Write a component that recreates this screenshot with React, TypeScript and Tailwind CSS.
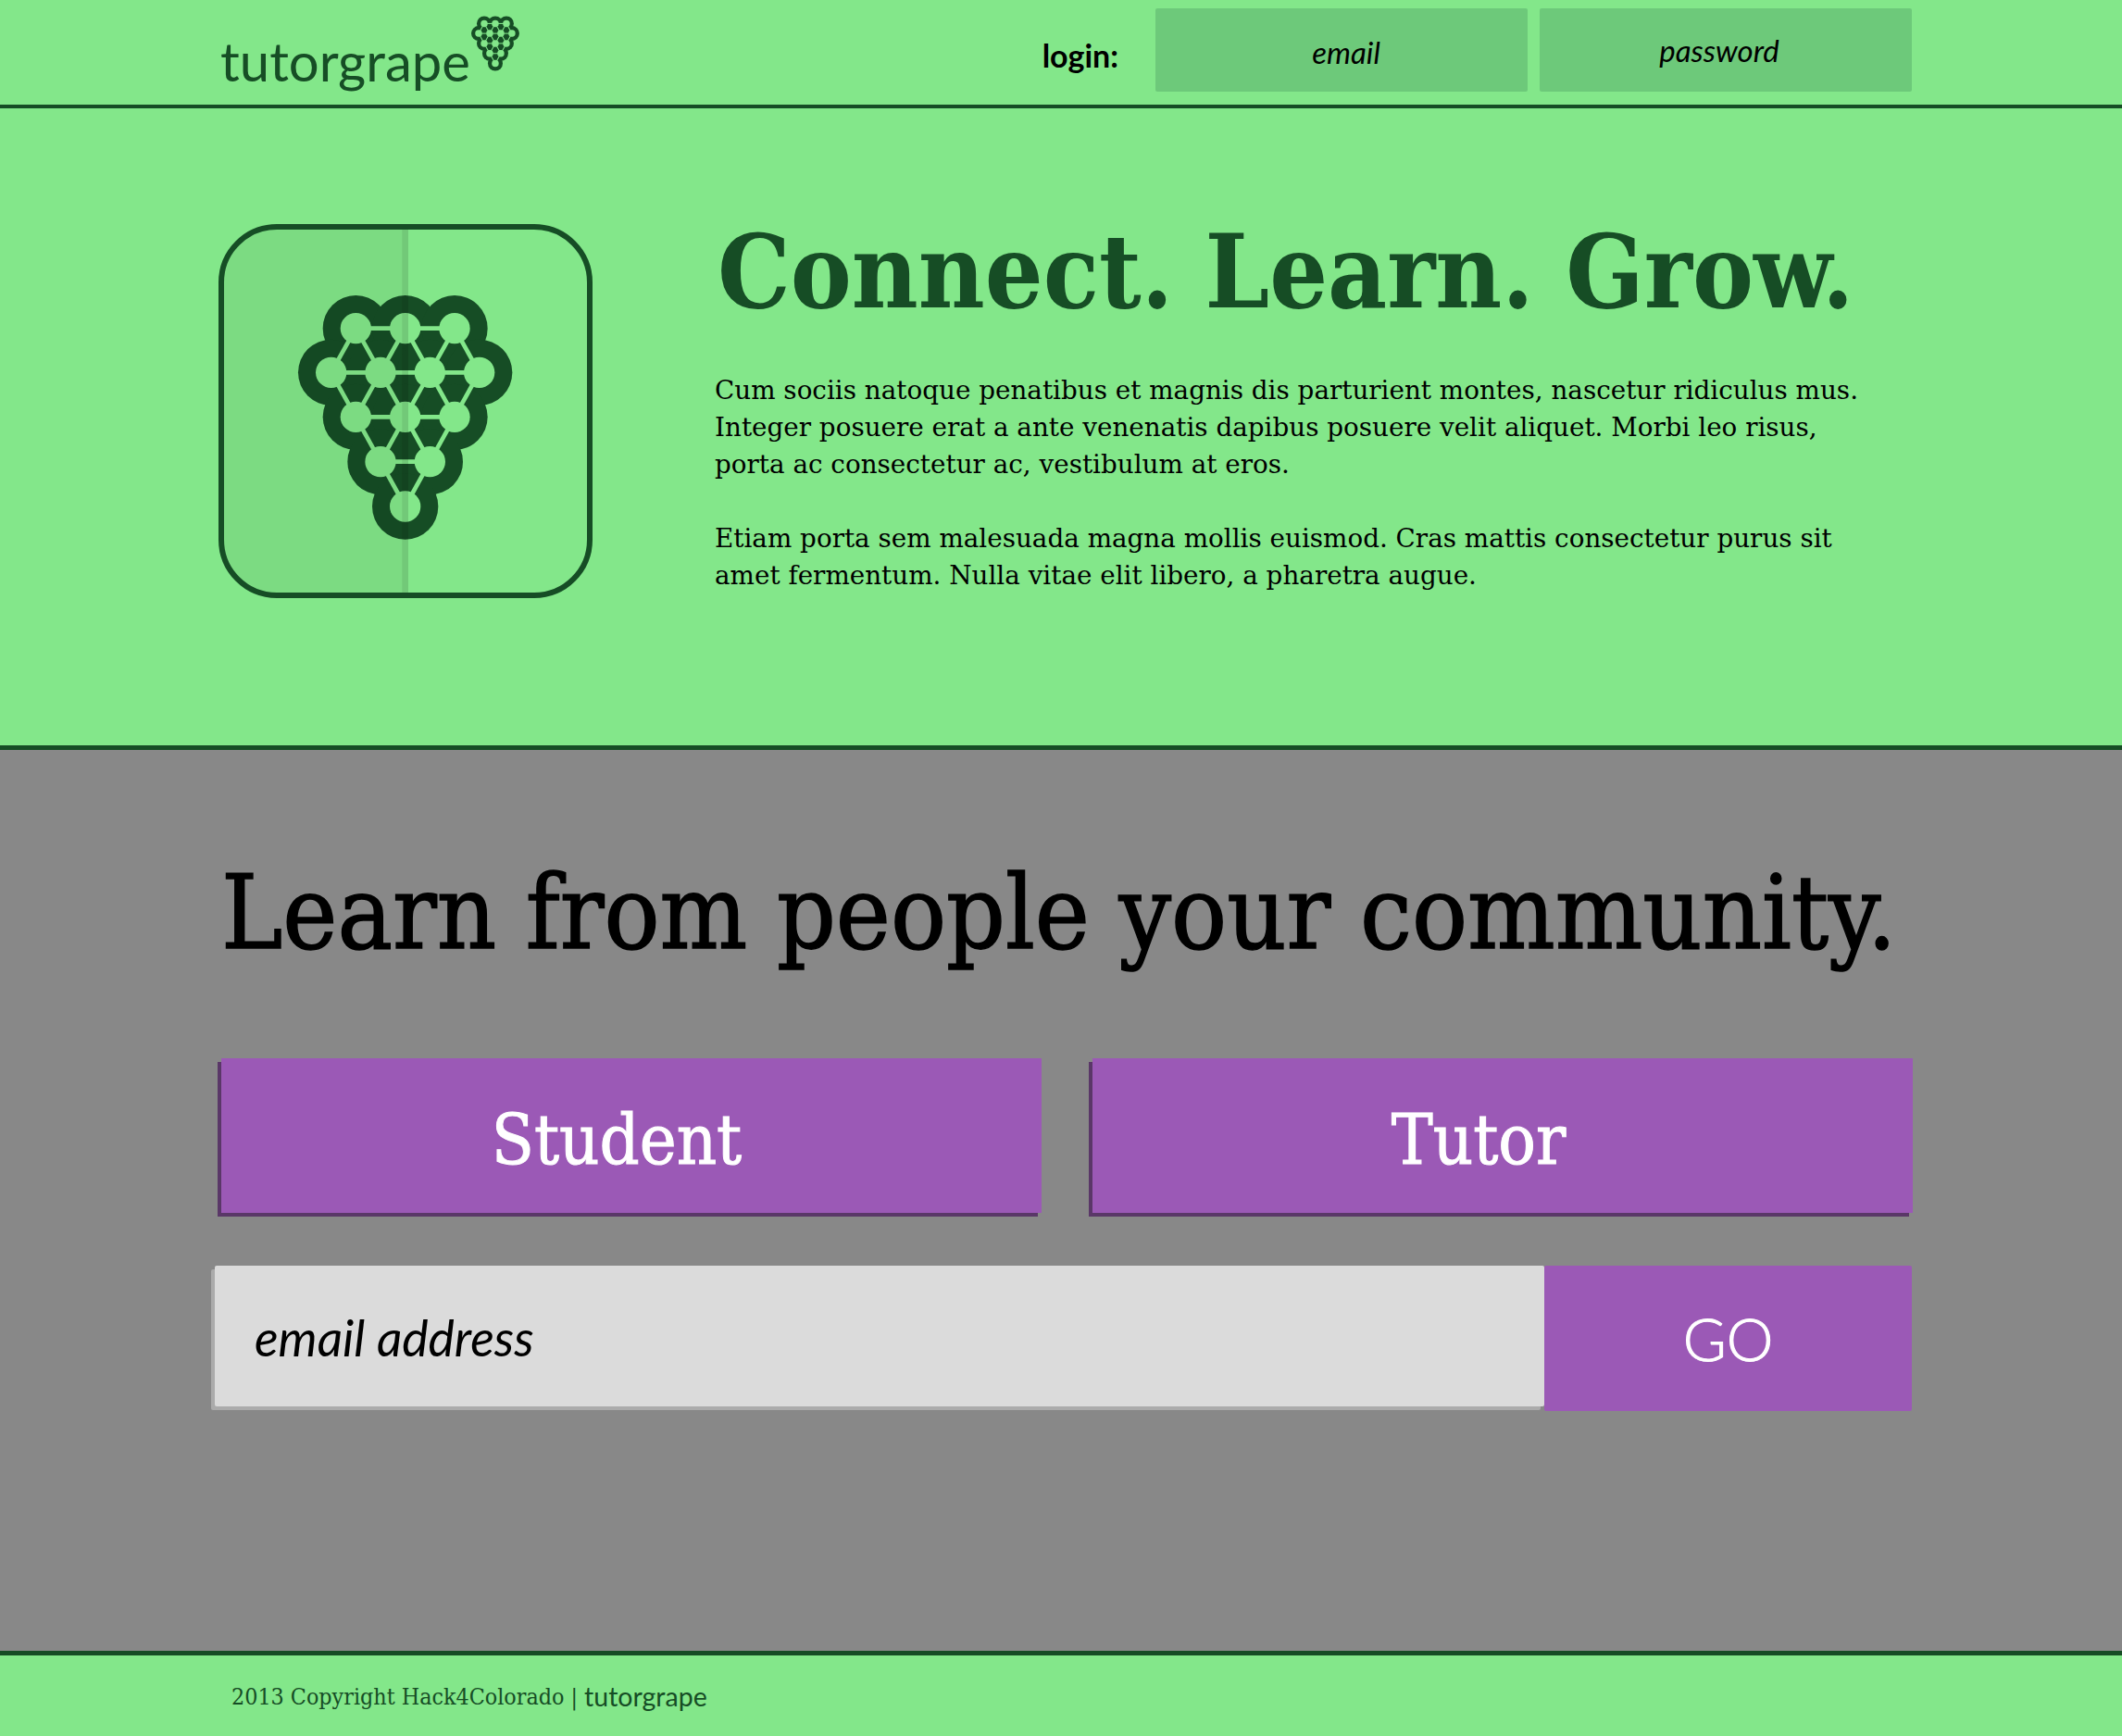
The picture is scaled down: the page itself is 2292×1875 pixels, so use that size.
const nodes: [number, number][] = [
  [495, 373], [655, 373], [815, 373],
  [415, 516], [575, 516], [735, 516], [895, 516],
  [495, 660], [655, 660], [815, 660],
  [575, 805], [735, 805],
  [655, 950],
];

// neighbours in the triangular lattice
const edges: [number, number][] = [];
nodes.forEach((a, i) => {
  nodes.forEach((b, j) => {
    if (j > i && Math.hypot(a[0] - b[0], a[1] - b[1]) < 220) edges.push([i, j]);
  });
});

function Grape({ fill }: { fill: string }) {
  return (
    <>
      {nodes.map(([x, y], i) => (
        <circle key={i} cx={x} cy={y} r={107} fill="#164d25" />
      ))}
      {edges.map(([a, b], i) => (
        <line key={i} x1={nodes[a][0]} y1={nodes[a][1]} x2={nodes[b][0]} y2={nodes[b][1]} stroke={fill} strokeWidth={14} />
      ))}
      {nodes.map(([x, y], i) => (
        <circle key={i} cx={x} cy={y} r={50} fill={fill} />
      ))}
    </>
  );
}

function SmallLogo() {
  return (
    <svg viewBox="308 266 695 791" className="w-[52px] h-[60px] shrink-0 mt-[17px] ml-[1px]">
      <Grape fill="#83e78a" />
    </svg>
  );
}

function BigLogo() {
  return (
    <svg viewBox="50 35 1212 1212" className="w-[404px] h-[404px] shrink-0">
      <defs>
        <clipPath id="tile">
          <rect x="59" y="44" width="1194" height="1194" rx="180" />
        </clipPath>
      </defs>
      <Grape fill="#83e78a" />
      <g clipPath="url(#tile)">
        <rect x="59" y="44" width="586" height="1194" fill="#000" fillOpacity={0.05} />
        <rect x="645" y="44" width="20" height="1194" fill="#000" fillOpacity={0.13} />
      </g>
      <rect x="59" y="44" width="1194" height="1194" rx="180" fill="none" stroke="#164d25" strokeWidth={18} />
    </svg>
  );
}

const slab = "[font-family:'DejaVu_Serif',serif]";
const lato = "[font-family:'Lato',sans-serif]";

export default function App() {
  return (
    <div className="w-full h-[1875px] flex flex-col bg-[#888888]">
      {/* Header */}
      <header className="h-[117px] shrink-0 bg-[#83e78a] border-b-4 border-[#164d25] flex pl-[238px]">
        <div className={`${lato} text-[58px] leading-none text-[#164d25] mt-[37px]`}>tutorgrape</div>
        <SmallLogo />
        <div className={`${lato} font-bold text-[34px] text-black ml-auto mt-[43px] leading-none`}>login:</div>
        <div className={`${lato} italic text-[33px] leading-none text-black w-[402px] h-[90px] mt-[9px] ml-[40px] bg-[#6dc97a] rounded-[2px] flex items-center justify-center pl-[10px] pt-[5px]`}>email</div>
        <div className={`${lato} italic text-[33px] leading-none text-black w-[402px] h-[90px] mt-[9px] ml-[13px] mr-[227px] bg-[#6dc97a] rounded-[2px] flex items-center justify-center pr-[14px] pt-[1px]`}>password</div>
      </header>

      {/* Hero */}
      <section className="h-[693px] shrink-0 bg-[#83e78a] border-b-[5px] border-[#164d25] flex pl-[236px] pt-[125px]">
        <BigLogo />
        <div className="ml-[132px]">
          <h1 className={`${slab} font-bold [font-stretch:condensed] text-[110px] leading-none -mt-[3px] ml-[3px] text-[#164d25] whitespace-nowrap`}>Connect. Learn. Grow.</h1>
          <div className={`${slab} text-[27.8px] leading-[40px] text-black mt-[53px] whitespace-nowrap`}>
            <p>Cum sociis natoque penatibus et magnis dis parturient montes, nascetur ridiculus mus.</p>
            <p>Integer posuere erat a ante venenatis dapibus posuere velit aliquet. Morbi leo risus,</p>
            <p>porta ac consectetur ac, vestibulum at eros.</p>
            <p className="mt-[40px]">Etiam porta sem malesuada magna mollis euismod. Cras mattis consectetur purus sit</p>
            <p>amet fermentum. Nulla vitae elit libero, a pharetra augue.</p>
          </div>
        </div>
      </section>

      {/* Sign up */}
      <section className="flex-1 bg-[#888888] pt-[120px]">
        <h2 className={`${slab} [font-stretch:condensed] [-webkit-text-stroke:1.5px_black] text-[111px] leading-none text-black ml-[239px] whitespace-nowrap`}>Learn from people your community.</h2>
        <div className="flex gap-[55px] ml-[239px] w-[1827px] mt-[102px]">
          <button className={`${slab} [font-stretch:condensed] [-webkit-text-stroke:1px_white] w-[886px] h-[167px] bg-[#9b59b6] shadow-[-4px_4px_0_#5a3768] text-white text-[75px] pr-[32px] pt-[10px]`}>Student</button>
          <button className={`${slab} [font-stretch:condensed] [-webkit-text-stroke:1px_white] w-[886px] h-[167px] bg-[#9b59b6] shadow-[-4px_4px_0_#5a3768] text-white text-[75px] pr-[52px] pt-[10px]`}>Tutor</button>
        </div>
        <div className="flex ml-[232px] w-[1833px] h-[157px] mt-[57px]">
          <div className={`${lato} italic flex-1 h-[152px] bg-[#dbdbdb] rounded-[2px] shadow-[-4px_4px_0_#ababab] text-black text-[53.5px] flex items-center pl-[43px] pt-[2px]`}>email address</div>
          <button className={`${lato} font-light [-webkit-text-stroke:1px_white] w-[397px] bg-[#9b59b6] rounded-[2px] text-white text-[64px]`}>GO</button>
        </div>
      </section>

      {/* Footer */}
      <footer className="h-[92px] shrink-0 bg-[#83e78a] border-t-[5px] border-[#164d25] flex items-center pl-[250px] pt-[1px] text-[#164d25]">
        <span className={`${slab} [font-stretch:condensed] text-[24.8px] whitespace-pre pt-[2px]`}>2013 Copyright Hack4Colorado | </span>
        <span className={`${lato} text-[28.5px]`}>tutorgrape</span>
      </footer>
    </div>
  );
}
